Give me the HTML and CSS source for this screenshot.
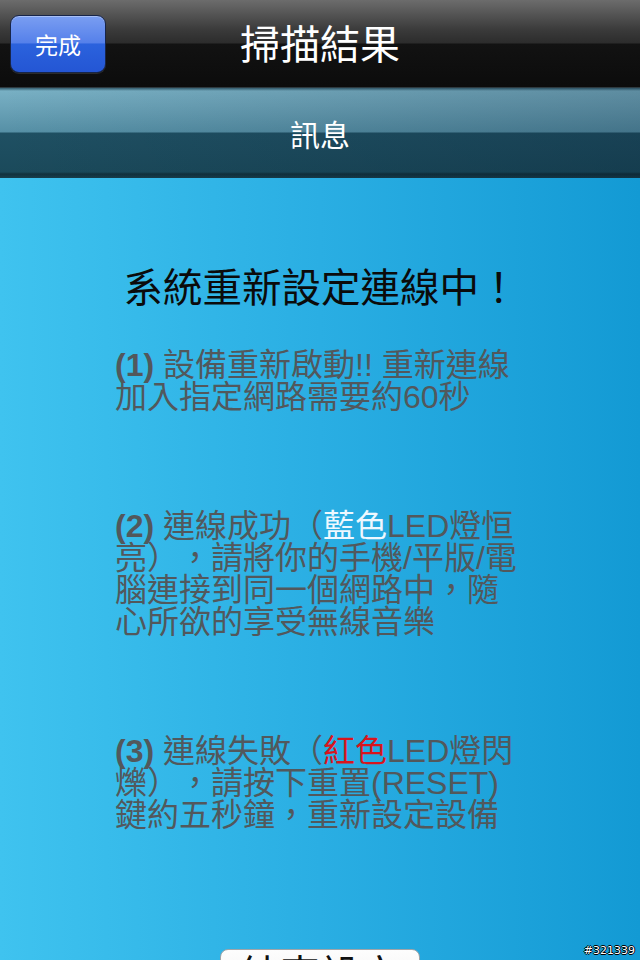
FILE: index.html
```html
<!DOCTYPE html>
<html lang="zh-Hant">
<head>
<meta charset="utf-8">
<title>掃描結果</title>
<link rel="stylesheet" href="styles.css">
</head>
<body>
<div class="screen">
  <header class="navbar">
    <button class="done-btn">完成</button>
    <h1 class="nav-title">掃描結果</h1>
  </header>
  <div class="subbar">訊息</div>
  <main class="content">
    <h2 class="heading">系統重新設定連線中！</h2>
    <p class="para para-first"><b>(1)</b> 設備重新啟動!! 重新連線加入指定網路需要約60秒</p>
    <p class="para"><b>(2)</b> 連線成功（<span class="blue">藍色</span>LED燈恒亮），請將你的手機/平版/電腦連接到同一個網路中，隨心所欲的享受無線音樂</p>
    <p class="para"><b>(3)</b> 連線失敗（<span class="red">紅色</span>LED燈閃爍），請按下重置(RESET)鍵約五秒鐘，重新設定設備</p>
    <div class="bottom-row">
      <button class="finish-btn">結束設定</button>
    </div>
  </main>
  <div class="watermark">#321339</div>
</div>
</body>
</html>
```

FILE: styles.css
```css
html, body {
  margin: 0;
  padding: 0;
}
body {
  width: 640px;
  height: 960px;
  overflow: hidden;
  font-family: "Liberation Sans", "Noto Sans CJK TC", sans-serif;
  text-spacing-trim: space-all;
}
.screen {
  position: relative;
  width: 640px;
  height: 960px;
  overflow: hidden;
  display: flex;
  flex-direction: column;
}
.navbar {
  height: 87px;
  flex: none;
  display: flex;
  align-items: center;
  position: relative;
  background: linear-gradient(to bottom, #6c6c6c 0px, #3a3a3a 30px, #2c2c2c 43px, #121212 44px, #0c0c0c 86px);
  border-bottom: 1px solid #2e3a40;
}
.done-btn {
  margin-left: 10px;
  width: 96px;
  height: 58px;
  border: 1px solid #17254a;
  border-radius: 9px;
  background: linear-gradient(to bottom, #7a9ef2 0%, #5580ea 48%, #2b62dd 50%, #2456d4 100%);
  box-shadow: inset 0 1px 0 rgba(255,255,255,0.35), 0 1px 0 rgba(255,255,255,0.12);
  color: #fff;
  font-family: "Noto Sans CJK TC", sans-serif;
  font-size: 23px;
  padding: 0;
  margin-top: 1px;
  line-height: 1;
}
.nav-title {
  position: absolute;
  left: 0;
  right: 0;
  top: 0;
  bottom: 0;
  margin: 0;
  display: flex;
  align-items: center;
  justify-content: center;
  color: #fff;
  font-weight: normal;
  font-size: 40px;
  font-family: "Noto Sans CJK TC", sans-serif;
  pointer-events: none;
  padding-bottom: 4px;
}
.subbar {
  height: 90px;
  flex: none;
  display: flex;
  align-items: center;
  justify-content: center;
  color: #fff;
  font-size: 30px;
  font-family: "Noto Sans CJK TC", sans-serif;
  background:
    linear-gradient(to right, rgba(0,0,0,0) 0%, rgba(0,15,35,0.22) 100%),
    linear-gradient(to bottom, #355f70 0px, #78b0c4 3px, #6ba3b8 20px, #5690a6 44px, #1f5063 45px, #1b4a5b 84px, #12323e 86px, #183f4d 90px);
}
.content {
  flex: 1;
  background: linear-gradient(to right, #3fc3ef 0%, #2aaee3 50%, #139ad4 100%);
  padding-top: 88px;
  display: flex;
  flex-direction: column;
}
.heading {
  margin: 0;
  font-weight: normal;
  font-size: 39.5px;
  line-height: 44px;
  color: #0b0b0b;
  text-align: center;
  padding-left: 2px;
}
.para {
  margin: 97px 0 0 115px;
  width: 405px;
  font-size: 32px;
  line-height: 32px;
  color: #52585c;
}
.para-first {
  margin-top: 39px;
}
.para b {
  font-weight: bold;
}
.blue {
  color: #eef8ff;
}
.red {
  color: #d8151d;
}
.bottom-row {
  margin-top: 118px;
  display: flex;
  justify-content: center;
}
.finish-btn {
  width: 200px;
  height: 60px;
  border: 1px solid #a0a4a8;
  border-radius: 8px;
  background: linear-gradient(to bottom, #fdfdfd 0%, #eeeeee 100%);
  color: #111;
  font-family: "Noto Sans CJK TC", sans-serif;
  font-size: 40px;
  line-height: 1;
  padding: 0;
  padding-top: 2px;
  display: flex;
  justify-content: center;
  align-items: flex-start;
}
.watermark {
  position: absolute;
  right: 5px;
  bottom: 3px;
  font-family: "DejaVu Sans", sans-serif;
  font-size: 11px;
  color: #fff;
  text-shadow: -1px 0 0 #000, 1px 0 0 #000, 0 -1px 0 #000, 0 1px 0 #000;
}
```
